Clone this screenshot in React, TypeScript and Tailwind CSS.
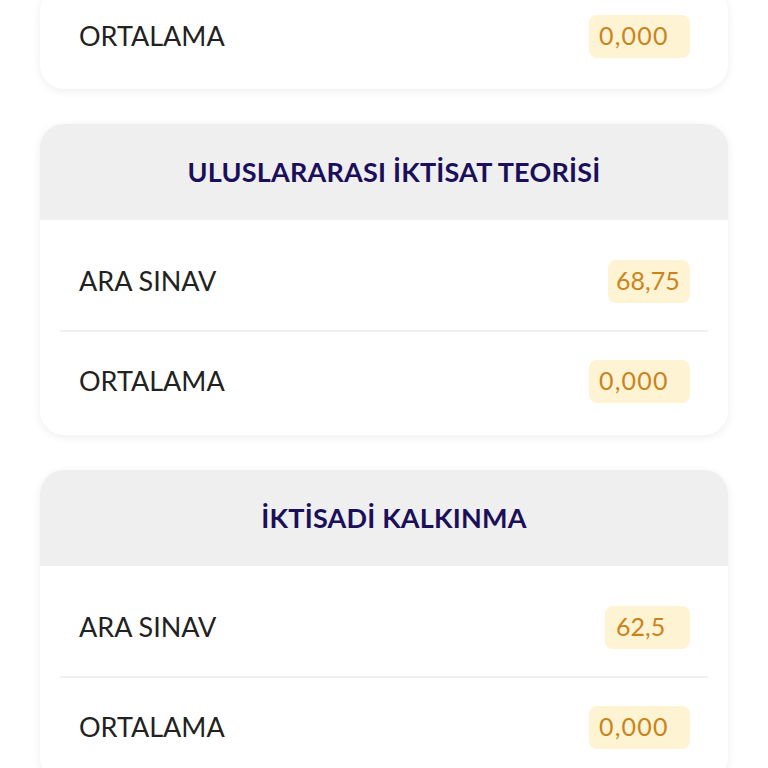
import React from "react";

type Row = { label: string; value: string; w: string; t: string };
type Course = { title?: string; rows: Row[] };

const zero: Row = { label: "ORTALAMA", value: "0,000", w: "w-[101px] pl-[10px]", t: "tracking-[1.2px]" };

const courses: Course[] = [
  { rows: [zero] },
  {
    title: "ULUSLARARASI İKTİSAT TEORİSİ",
    rows: [{ label: "ARA SINAV", value: "68,75", w: "w-[82px] pl-[8px]", t: "tracking-[0px]" }, zero],
  },
  {
    title: "İKTİSADİ KALKINMA",
    rows: [{ label: "ARA SINAV", value: "62,5", w: "w-[85px] pl-[11px]", t: "tracking-[0px]" }, zero],
  },
];

function Card({ course, first }: { course: Course; first?: boolean }) {
  return (
    <div className="rounded-[24px] bg-white shadow-[0_2px_10px_rgba(0,0,0,0.07)] overflow-hidden">
      {course.title && (
        <div className="h-[96px] bg-[#efeff0] flex items-center justify-center pl-[20px]">
          <span className="text-[27px] font-bold text-[#1b0f5a] tracking-[0.2px]">{course.title}</span>
        </div>
      )}
      <div className={first ? "pb-[4px]" : "pt-[12px] pb-[5px]"}>
        {course.rows.map((r, i) => (
          <div key={i}>
            {i > 0 && <div className="mx-[20px] h-[2px] bg-[#f0f0f0]" />}
            <div className="h-[98px] flex items-center justify-between pl-[39px] pr-[38px]">
              <span className="text-[27px] text-[#222222]">{r.label}</span>
              <span
                className={`${r.w} ${r.t} h-[43px] rounded-[8px] bg-[#fef3d3] text-[#c9841c] text-[25px] flex items-center`}
              >
                {r.value}
              </span>
            </div>
          </div>
        ))}
      </div>
    </div>
  );
}

export default function App() {
  return (
    <div
      className="w-[768px] h-[768px] overflow-hidden bg-white"
      style={{ fontFamily: "Lato, 'Noto Sans', sans-serif" }}
    >
      <div className="px-[40px] mt-[-13px] flex flex-col gap-[35px]">
        {courses.map((c, i) => (
          <Card key={i} course={c} first={i === 0} />
        ))}
      </div>
    </div>
  );
}
